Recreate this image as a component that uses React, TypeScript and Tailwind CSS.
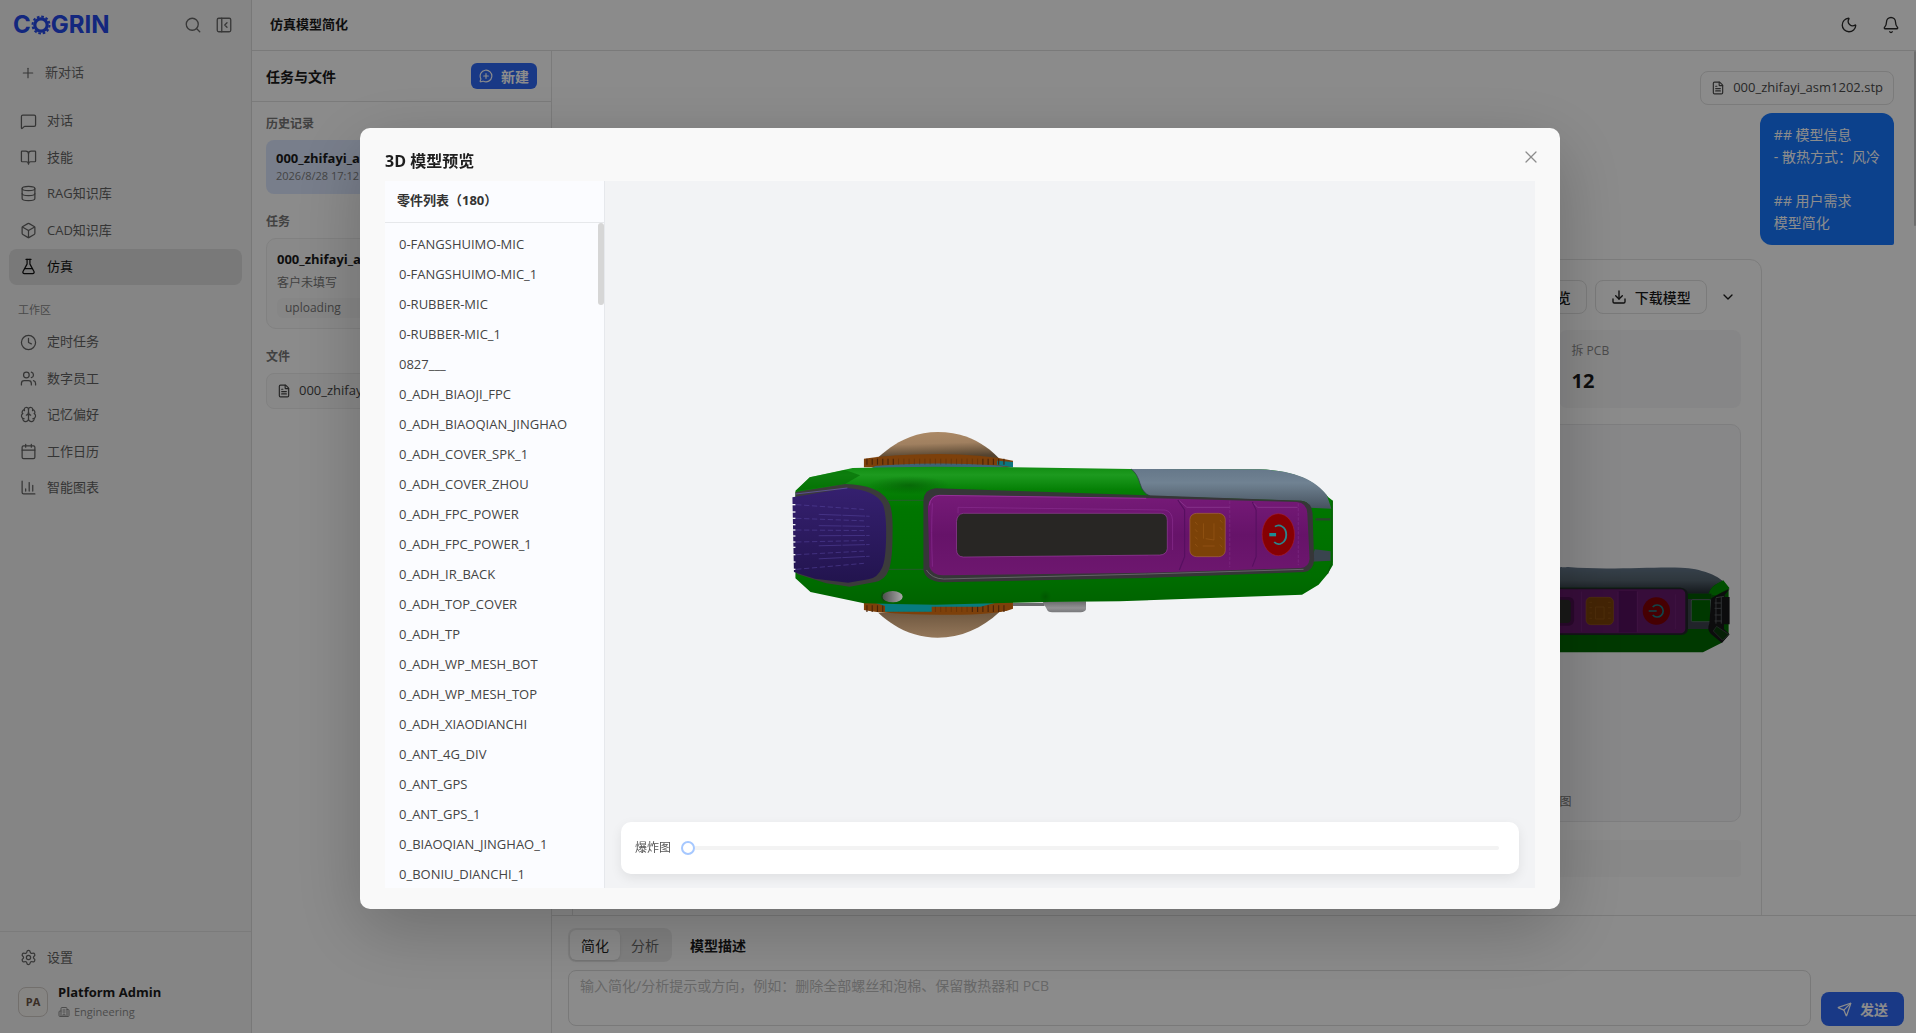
import { useState } from 'react';
import type { ReactNode } from 'react';
import {
  Bell,
  Box,
  BookOpen,
  Brain,
  Building2,
  Calendar,
  ChartColumn,
  ChevronDown,
  Clock,
  Database,
  Download,
  Eye,
  FileText,
  FlaskConical,
  MessageCirclePlus,
  MessageSquare,
  Moon,
  PanelLeftClose,
  Plus,
  Search,
  Send,
  Settings,
  Users,
  X,
} from 'lucide-react';
import type { LucideIcon } from 'lucide-react';

interface NavItem {
  label: string;
  icon: LucideIcon;
  active?: boolean;
}

const mainNav: NavItem[] = [
  { label: '对话', icon: MessageSquare },
  { label: '技能', icon: BookOpen },
  { label: 'RAG知识库', icon: Database },
  { label: 'CAD知识库', icon: Box },
  { label: '仿真', icon: FlaskConical, active: true },
];

const workNav: NavItem[] = [
  { label: '定时任务', icon: Clock },
  { label: '数字员工', icon: Users },
  { label: '记忆偏好', icon: Brain },
  { label: '工作日历', icon: Calendar },
  { label: '智能图表', icon: ChartColumn },
];

const parts = [
  '0-FANGSHUIMO-MIC',
  '0-FANGSHUIMO-MIC_1',
  '0-RUBBER-MIC',
  '0-RUBBER-MIC_1',
  '0827___',
  '0_ADH_BIAOJI_FPC',
  '0_ADH_BIAOQIAN_JINGHAO',
  '0_ADH_COVER_SPK_1',
  '0_ADH_COVER_ZHOU',
  '0_ADH_FPC_POWER',
  '0_ADH_FPC_POWER_1',
  '0_ADH_IR_BACK',
  '0_ADH_TOP_COVER',
  '0_ADH_TP',
  '0_ADH_WP_MESH_BOT',
  '0_ADH_WP_MESH_TOP',
  '0_ADH_XIAODIANCHI',
  '0_ANT_4G_DIV',
  '0_ANT_GPS',
  '0_ANT_GPS_1',
  '0_BIAOQIAN_JINGHAO_1',
  '0_BONIU_DIANCHI_1',
];

function Logo() {
  return (
    <div className="flex items-center font-['Inter',sans-serif] text-[24px] leading-6 font-bold text-[#2347e6]">
      <span>C</span>
      <svg viewBox="0 0 20 20" className="size-5" fill="none" stroke="currentColor" aria-label="O">
        <circle cx="10" cy="10" r="6.2" strokeWidth="3.2" />
        <circle cx="10" cy="10" r="8.5" strokeWidth="2" strokeDasharray="2.6 1.85" />
      </svg>
      <span>GRIN</span>
    </div>
  );
}

function NavList({ items }: { items: NavItem[] }) {
  return (
    <nav className="grid h-[182px] auto-rows-fr">
      {items.map(({ label, icon: Icon, active }) => (
        <a
          key={label}
          href="#"
          className={
            active
              ? 'flex items-center gap-[10px] rounded-lg bg-[#dcdcdc] px-[11px] text-[13px] text-[#111]'
              : 'flex items-center gap-[10px] rounded-lg px-[11px] text-[13px] text-[#626262]'
          }
        >
          <Icon size={17} strokeWidth={1.75} />
          {label}
        </a>
      ))}
    </nav>
  );
}

function Sidebar() {
  return (
    <aside className="flex w-[252px] shrink-0 flex-col border-r border-[#dadada] bg-[#f2f2f2]">
      <div className="flex h-[50px] items-center pr-[18px] pl-[13px]">
        <Logo />
        <button aria-label="搜索" className="ml-auto text-[#666]">
          <Search size={18} strokeWidth={1.75} />
        </button>
        <button aria-label="收起侧栏" className="ml-[13px] text-[#666]">
          <PanelLeftClose size={18} strokeWidth={1.75} />
        </button>
      </div>

      <div className="mt-[5px] px-[9px]">
        <button className="mb-3 flex h-9 w-full items-center gap-[9px] px-[11px] text-[13px] text-[#666]">
          <Plus size={16} strokeWidth={1.75} />
          新对话
        </button>
        <NavList items={mainNav} />
        <p className="mt-4 mb-[5px] px-[9px] text-[11px] leading-[18px] text-[#888]">工作区</p>
        <NavList items={workNav} />
      </div>

      <div className="mt-auto border-t border-[#e0e0e0] px-[9px] pt-2 pb-[11px]">
        <a href="#" className="flex h-[35px] items-center gap-[10px] px-[11px] text-[13px] text-[#626262]">
          <Settings size={17} strokeWidth={1.75} />
          设置
        </a>
        <div className="mt-[7px] flex items-center gap-[10px] px-[9px]">
          <div className="flex size-[30px] items-center justify-center rounded-lg border border-[#cfcac5] bg-[#f5f2ef] text-[11px] font-bold text-[#6b5546]">
            PA
          </div>
          <div>
            <p className="text-[13px] leading-5 font-bold text-[#1c1c1c]">Platform Admin</p>
            <p className="flex items-center gap-1 text-[11px] leading-5 text-[#8a8a8a]">
              <Building2 size={12} />
              Engineering
            </p>
          </div>
        </div>
      </div>
    </aside>
  );
}

function SectionLabel({ children }: { children: ReactNode }) {
  return <h3 className="mb-2 text-[12px] leading-4 font-semibold text-[#777]">{children}</h3>;
}

function TaskColumn() {
  return (
    <section className="flex w-[300px] shrink-0 flex-col border-r border-[#e0e0e0] bg-[#fdfdfd]">
      <div className="flex h-[51px] items-center justify-between border-b border-[#e0e0e0] px-[14px]">
        <h2 className="text-[14px] font-bold text-[#1a1a1a]">任务与文件</h2>
        <button className="flex h-[26px] items-center gap-2 rounded-md bg-[#2f68f5] px-2 text-[14px] font-bold text-white">
          <MessageCirclePlus size={14} />
          新建
        </button>
      </div>
      <div className="px-[14px] pt-[14px]">
        <SectionLabel>历史记录</SectionLabel>
        <div className="mb-5 rounded-lg bg-[#dbe6fd] px-[10px] py-[9px]">
          <p className="text-[13px] leading-[18px] font-bold text-[#1a1a1a]">000_zhifayi_asm1202</p>
          <p className="text-[11px] leading-[18px] text-[#7c7c7c]">2026/8/28 17:12</p>
        </div>
        <SectionLabel>任务</SectionLabel>
        <div className="mb-5 rounded-[10px] border border-[#ebebeb] bg-[#fafafa] p-[10px]">
          <p className="text-[13px] leading-5 font-bold text-[#1a1a1a]">000_zhifayi_asm1202</p>
          <p className="mt-[5px] text-[12px] leading-[18px] text-[#777]">客户未填写</p>
          <p className="mt-[6px] rounded-md bg-[#f4f4f4] px-2 text-[12px] leading-5 text-[#777]">uploading</p>
        </div>
        <SectionLabel>文件</SectionLabel>
        <div className="flex h-9 items-center gap-2 rounded-lg border border-[#ebebeb] bg-[#f8f8f8] px-[10px] text-[13px] text-[#444]">
          <FileText size={14} />
          000_zhifayi_asm1202.stp
        </div>
      </div>
    </section>
  );
}

const metrics = [
  { name: '原始零件', value: 180 },
  { name: '保留零件', value: 96 },
  { name: '拆螺丝', value: 24 },
  { name: '拆泡棉', value: 18 },
  { name: '拆线缆', value: 6 },
  { name: '拆 PCB', value: 12 },
];

const views = ['俯视图', '侧视图', '正视图'];

// side view used in the result thumbnails
function DeviceThumb() {
  return (
    <svg viewBox="-534 15 1059 300" className="h-[100px] w-full" aria-hidden="true">
      <defs>
        <linearGradient id="thumbTop" x1="0" y1="0" x2="0" y2="1">
          <stop offset="0" stopColor="#64778a" />
          <stop offset="0.5" stopColor="#55646f" />
          <stop offset="1" stopColor="#252c33" />
        </linearGradient>
      </defs>
      <path d="M-490 60 L-534 130 L-534 230 L-490 292 L445 292 L500 264 L522 240 L522 98 L500 76 L440 50 L-490 50 Z" fill="#006800" />
      <path d="M-440 42 C-300 30 0 40 40 36 C160 46 300 34 380 38 C440 40 490 62 506 80 C480 84 466 100 462 116 L396 116 Q390 98 376 98 L-440 98 Z" fill="url(#thumbTop)" />
      <path d="M506 76 L525 100 Q500 110 488 122 L462 118 Q466 94 506 76 Z" fill="#009000" />
      <path d="M-534 98 H378 Q400 100 400 120 V220 Q400 240 378 240 H-534 Z" fill="#22262a" />
      <rect x="-400" y="103" width="792" height="132" rx="14" fill="#64186a" />
      <path d="M80 110 V230 M190 110 V230 M248 110 V230 M362 118 V222" stroke="#7d2c86" strokeWidth="1.5" />
      <path d="M192 108 H246 V232 H192 Z" fill="#54105e" />
      <rect x="-340" y="126" width="398" height="86" rx="16" fill="#4b0f50" />
      <rect x="-334" y="134" width="382" height="70" rx="12" fill="#2d2d2b" />
      <rect x="94" y="127" width="82" height="82" rx="14" fill="#7b4208" stroke="#965b18" strokeWidth="2" />
      <path d="M122 156 H148 V192 H122 Z M104 142 h8 M104 158 h8 M104 174 h8 M104 190 h8 M160 142 h8 M160 158 h8 M160 174 h8 M160 190 h8" fill="none" stroke="#965b18" strokeWidth="2" />
      <circle cx="305" cy="168" r="41" fill="#800004" />
      <path d="M294 156 A18 18 0 1 1 294 180 M282 168 H306" fill="none" stroke="#1d7f88" strokeWidth="5" />
      <path d="M400 116 H470 V222 H400 Z" fill="#3c434d" />
      <rect x="410" y="134" width="58" height="66" rx="4" fill="#006600" stroke="#6f7983" strokeWidth="2" />
      <path d="M400 116 H470 V132 H400 Z" fill="#005a00" />
      <path d="M470 130 Q488 118 525 102 L510 120 L510 126 H525 V208 H508 V222 L525 238 L502 264 L468 236 Q456 222 464 206 Z" fill="#161718" />
      <path d="M484 128 L508 124 M480 144 H500 M480 160 H500 M480 180 H500 M480 198 H502 M500 126 V206 M484 130 V206" stroke="#55585c" strokeWidth="3" />
      <path d="M486 214 L522 238 L504 256 L476 228 Z" fill="#0a3a0c" stroke="#4c5053" strokeWidth="2" />
    </svg>
  );
}

function ChatArea() {
  return (
    <div className="relative flex-1 overflow-hidden pt-5 pr-[22px] pl-5">
      <div className="flex flex-col items-end">
        <a
          href="#"
          className="flex h-[34px] items-center gap-2 rounded-lg border border-[#e0e0e0] px-[10px] text-[13px] text-[#4a4a4a]"
        >
          <FileText size={14} />
          000_zhifayi_asm1202.stp
        </a>
        <div className="mt-2 rounded-xl rounded-br-[2px] bg-[#1677ff] px-[14px] py-[11px] text-[14px] leading-[22px] whitespace-pre-line text-white">
          {'## 模型信息\n- 散热方式：风冷\n\n## 用户需求\n模型简化'}
        </div>
      </div>

      <div className="mt-[14px] h-[800px] w-[90%] rounded-xl border border-[#e2e2e2] p-5">
        <div className="flex items-center justify-end gap-2 text-[14px] font-medium text-[#1a1a1a]">
          <button className="flex h-[34px] items-center gap-[10px] rounded-lg border border-[#e0e0e0] px-[15px]">
            <Eye size={16} />
            模型预览
          </button>
          <button className="flex h-[34px] items-center gap-2 rounded-lg border border-[#e0e0e0] px-[15px]">
            <Download size={16} />
            下载模型
          </button>
          <button aria-label="展开" className="flex h-[34px] w-[26px] items-center justify-center">
            <ChevronDown size={16} />
          </button>
        </div>
        <div className="mt-4 grid grid-cols-6 gap-3">
          {metrics.map((metric) => (
            <div key={metric.name} className="h-[78px] rounded-lg bg-[#f5f5f6] px-3 pt-3">
              <p className="text-[12px] leading-[18px] text-[#888]">{metric.name}</p>
              <p className="mt-[7px] text-[20px] leading-7 font-bold text-[#1a1a1a]">{metric.value}</p>
            </div>
          ))}
        </div>
        <div className="mt-4 grid grid-cols-3 gap-3">
          {views.map((view) => (
            <figure
              key={view}
              className="flex h-[398px] flex-col rounded-[10px] border border-[#e6e6e8] bg-[#f6f6f8] p-[10px]"
            >
              <div className="flex flex-1 items-center pb-2">
                <DeviceThumb />
              </div>
              <figcaption className="text-center text-[12px] leading-[18px] text-[#777]">{view}</figcaption>
            </figure>
          ))}
        </div>
        <div className="mt-[18px] h-[37px] rounded bg-[#f7f7f7]" />
      </div>

      <div className="absolute top-0 right-0 h-[175px] w-[2px] rounded bg-[#c8c8c8]" />
    </div>
  );
}

function Composer() {
  return (
    <div className="border-t border-[#dedede] pt-3 pr-3 pb-[7px] pl-4">
      <div className="flex items-center text-[14px]">
        <div className="flex h-[34px] rounded-lg bg-[#ebebeb] p-[2px]">
          <button className="rounded-md bg-[#fdfdfd] px-[11px] text-[#1f1f1f] shadow-sm">简化</button>
          <button className="px-[11px] text-[#666]">分析</button>
        </div>
        <label htmlFor="prompt" className="ml-[18px] font-bold text-[#1a1a1a]">
          模型描述
        </label>
      </div>
      <div className="mt-2 flex items-end gap-[10px]">
        <textarea
          id="prompt"
          placeholder="输入简化/分析提示或方向，例如：删除全部螺丝和泡棉、保留散热器和 PCB"
          className="h-14 flex-1 resize-none rounded-lg border border-[#dcdcdc] px-[11px] py-1 text-[14px] leading-[22px] placeholder:text-[#bdbdbd]"
        />
        <button className="flex h-[34px] items-center gap-2 rounded-lg bg-[#2f68f5] px-4 text-[14px] font-bold text-white">
          <Send size={15} />
          发送
        </button>
      </div>
    </div>
  );
}

// main 3D model; gradients imitate the shaded render
function DeviceModel() {
  const ticks = Array.from({ length: 27 }, (_, i) => 258 + i * 14);
  const ribs = [284, 306, 325, 344, 360, 378, 396, 412, 434, 456, 478];

  return (
    <svg viewBox="27 0 1541 750" preserveAspectRatio="none" className="h-[250px] w-[580px]" aria-label="3D 模型">
      <defs>
        <linearGradient id="domeTop" x1="0" y1="0" x2="0.15" y2="1">
          <stop offset="0" stopColor="#ad8a66" />
          <stop offset="0.5" stopColor="#a08060" />
          <stop offset="1" stopColor="#54432f" />
        </linearGradient>
        <linearGradient id="domeBottom" x1="0" y1="0" x2="0" y2="1">
          <stop offset="0" stopColor="#6e573f" />
          <stop offset="1" stopColor="#94775a" />
        </linearGradient>
        <linearGradient id="body" x1="0" y1="170" x2="0" y2="580" gradientUnits="userSpaceOnUse">
          <stop offset="0" stopColor="#118c12" />
          <stop offset="0.06" stopColor="#1d9a1f" />
          <stop offset="0.17" stopColor="#058005" />
          <stop offset="0.3" stopColor="#007600" />
          <stop offset="0.8" stopColor="#006e00" />
          <stop offset="1" stopColor="#006300" />
        </linearGradient>
        <linearGradient id="cap" x1="0" y1="0" x2="0" y2="1">
          <stop offset="0" stopColor="#66788a" />
          <stop offset="0.35" stopColor="#708292" />
          <stop offset="1" stopColor="#46525e" />
        </linearGradient>
        <linearGradient id="grip" x1="0" y1="0" x2="0" y2="1">
          <stop offset="0" stopColor="#35206f" />
          <stop offset="0.6" stopColor="#2a195c" />
          <stop offset="1" stopColor="#22144e" />
        </linearGradient>
        <linearGradient id="panel" x1="0" y1="0" x2="0" y2="1">
          <stop offset="0" stopColor="#761a78" />
          <stop offset="0.5" stopColor="#661369" />
          <stop offset="1" stopColor="#6e176f" />
        </linearGradient>
        <linearGradient id="hole" x1="0" y1="0" x2="1" y2="0">
          <stop offset="0" stopColor="#4d4d4d" />
          <stop offset="1" stopColor="#a9a9a9" />
        </linearGradient>
        <linearGradient id="knob" x1="0" y1="0" x2="0" y2="1">
          <stop offset="0" stopColor="#6a6a6c" />
          <stop offset="0.6" stopColor="#929294" />
          <stop offset="1" stopColor="#77777a" />
        </linearGradient>
        <radialGradient id="shade">
          <stop offset="0" stopColor="#004400" stopOpacity="0.45" />
          <stop offset="1" stopColor="#004a00" stopOpacity="0" />
        </radialGradient>
      </defs>

      {/* upper lens */}
      <path d="M288 142 C336 92 388 66 446 66 C506 66 560 88 608 144 Z" fill="url(#domeTop)" />
      <path d="M250 146 Q340 132 450 132 T646 152 V172 H250 Z" fill="#7d400a" />
      <path d="M280 168 Q440 154 600 166 L646 174 H270 Z" fill="#3c6577" />
      <path d="M604 152 L646 156 V172 L604 166 Z" fill="#0c7680" />
      {ticks.map((x) => (
        <path key={x} d={`M${x} 146 V164`} stroke="#47230a" strokeWidth={x < 330 || x > 560 ? 3 : 1} />
      ))}

      {/* lower lens */}
      <path d="M288 608 C336 658 388 683 446 683 C508 683 562 656 610 606 Z" fill="url(#domeBottom)" />
      <path d="M250 578 V600 Q300 612 450 614 T646 596 V574 Z" fill="#7d400a" />
      {ticks.map((x) => (
        <path key={x} d={`M${x} 586 V606`} stroke="#47230a" strokeWidth={x < 310 || x > 530 ? 3 : 1} />
      ))}
      <path d="M280 578 H600 L560 590 H430 V605 H306 V588 Z" fill="#077b80" />
      <path d="M646 578 H730 V588 H646 Z" fill="#6b6b6e" />
      <path d="M724 574 H840 V598 Q838 606 826 607 H750 Q738 607 736 598 Z" fill="url(#knob)" />

      {/* housing */}
      <path
        d="M68 242 L106 202 L220 174 L440 170 L646 172 L960 177 L1300 178 C1400 182 1450 215 1484 262 L1496 272 V465 L1482 492 L1458 524 L1414 554 L930 574 L724 576 L440 584 L250 580 L108 546 L68 505 Z"
        fill="url(#body)"
      />
      <ellipse cx="370" cy="226" rx="110" ry="28" fill="url(#shade)" />
      <path d="M106 202 L200 180 L240 196 L200 222 L70 242 Z" fill="#036a03" opacity="0.6" />
      <ellipse cx="732" cy="560" rx="16" ry="20" fill="url(#shade)" />
      <path d="M312 271 H410 M306 478 H414" stroke="#31543a" strokeWidth="2" />

      {/* grey end cap */}
      <path
        d="M960 177 L1300 178 C1400 182 1450 212 1480 256 L1492 296 L1436 293 Q1430 272 1410 272 L1010 258 Q990 248 984 222 Q976 190 960 177 Z"
        fill="url(#cap)"
      />
      <path d="M960 177 Q976 190 984 222 Q990 248 1010 258" fill="none" stroke="#2f3a45" strokeWidth="2" />
      <path d="M1450 328 H1490" stroke="#29452c" strokeWidth="7" />
      <path d="M1448 418 L1490 424 V452 L1436 455 Z" fill="#39444e" />
      <path d="M1494 272 V455 L1482 492" fill="none" stroke="#0a4a0a" strokeWidth="2" />

      {/* ribbed grip */}
      <path
        d="M68 246 L200 222 Q290 226 312 270 Q328 290 326 370 Q326 450 316 480 Q306 510 280 516 L212 530 L150 520 L72 492 Z"
        fill="#3b3b3b"
      />
      <path
        d="M60 262 L206 234 Q280 240 300 282 Q310 310 309 380 Q308 450 298 474 Q286 504 262 508 L208 518 L120 506 L64 486 Z"
        fill="url(#grip)"
      />
      {ribs.map((y, i) => (
        <g key={y}>
          <path d={`M56 ${y} h12`} stroke="#f2f3f5" strokeWidth="4" />
          <path
            d={i % 2 ? `M130 ${y + (370 - y) / 9} L265 ${y + (370 - y) / 5}` : `M70 ${y} L250 ${y + (370 - y) / 6}`}
            stroke="#5646a0"
            strokeWidth="1.5"
            strokeDasharray={i % 2 ? '60 3' : '14 7'}
          />
        </g>
      ))}
      <path d="M68 252 L206 234" stroke="#6a59b5" strokeWidth="2" />

      {/* front panel */}
      <path
        d="M440 235 L1000 256 L1412 272 Q1440 276 1442 310 L1446 450 Q1444 482 1420 486 L1000 504 L462 517 Q412 515 408 478 V272 Q410 238 440 235 Z"
        fill="#363638"
      />
      <path d="M416 480 Q430 506 462 507 L1000 492 L1418 478" fill="none" stroke="#77777a" strokeWidth="2" />
      <path
        d="M450 255 L1000 264 L1400 276 Q1426 278 1428 310 L1434 446 Q1432 472 1410 474 L1000 488 L460 496 Q430 494 424 470 L420 290 Q424 258 450 255 Z"
        fill="url(#panel)"
      />
      <path d="M424 286 Q426 258 450 256 L1000 265" fill="none" stroke="#a23ba6" strokeWidth="2" />
      <path d="M432 280 Q428 360 432 470" fill="none" stroke="#882a90" strokeWidth="2" />
      <path d="M500 310 V292 L1050 300 Q1068 304 1070 330 V420" fill="none" stroke="#862c8c" strokeWidth="2" />
      <path d="M1084 270 L1102 300 V440 L1088 480 M1282 276 L1292 300 V440 L1282 470" fill="none" stroke="#571060" strokeWidth="3" />
      <path d="M1088 272 L1108 292 H1222 M1286 280 L1296 292 H1402" fill="none" stroke="#8c3c92" strokeWidth="2" />
      <path d="M1222 272 V472 M1404 280 V466" stroke="#84328a" strokeWidth="1.5" strokeDasharray="10 4" />
      <path d="M514 310 H1040 Q1056 312 1056 332 V416 Q1054 434 1036 435 L514 441 Q496 440 496 418 V334 Q498 312 514 310 Z" fill="#282624" stroke="#aa4ab0" strokeWidth="1.5" />

      <rect x="1116" y="310" width="94" height="130" rx="18" fill="#7c4208" stroke="#b0704c" strokeWidth="1.5" />
      <path
        d="M1152 340 V386 M1180 340 V390 L1158 386 M1150 408 H1182 M1130 336 l6 8 M1130 358 l6 8 M1130 380 l6 8 M1130 402 l6 8 M1196 330 l6 8 M1196 352 l6 8 M1196 380 l6 8 M1196 404 l6 8"
        fill="none"
        stroke="#965716"
        strokeWidth="2"
      />
      <ellipse cx="1351" cy="374" rx="43" ry="63" fill="#860003" stroke="#b02028" strokeWidth="1.5" />
      <path d="M1342 350 C1354 340 1372 352 1372 374 C1372 398 1352 410 1340 396" fill="none" stroke="#2a858c" strokeWidth="5" />
      <path d="M1327 374 H1345" stroke="#1e8d94" strokeWidth="10" />

      <ellipse cx="326" cy="560" rx="27" ry="17" fill="url(#hole)" />
      <path d="M302 546 Q292 560 304 574" fill="none" stroke="#173d17" strokeWidth="3" />
    </svg>
  );
}

function PreviewModal() {
  const [explode, setExplode] = useState(0);

  return (
    <div className="fixed inset-0 flex items-start justify-center bg-black/45 pt-32">
      <div
        role="dialog"
        aria-labelledby="preview-title"
        className="relative ml-1 w-[1200px] max-w-full rounded-[10px] bg-[#f9f9f9] px-[25px] pb-[21px] shadow-[0_20px_70px_rgba(0,0,0,0.22)]"
      >
        <h2 id="preview-title" className="pt-[21px] pb-2 text-[16px] leading-6 font-bold text-[#1f1f1f]">
          3D 模型预览
        </h2>
        <button aria-label="关闭" className="absolute top-[19px] right-[19px] text-[#8c8c8c]">
          <X size={20} strokeWidth={1.5} />
        </button>

        <div className="flex h-[707px]">
          <div className="relative flex w-[220px] shrink-0 flex-col border-r border-[#e6e8ec] bg-[#fbfcff]">
            <h3 className="h-[42px] shrink-0 border-b border-[#e6e8eb] px-3 text-[13px] leading-[38px] font-bold text-[#333]">
              零件列表（180）
            </h3>
            <ul className="overflow-hidden px-2 pt-[6px]">
              {parts.map((part) => (
                <li key={part} className="h-[30px] truncate px-[6px] text-[13px] leading-[30px] text-[#444]">
                  {part}
                </li>
              ))}
            </ul>
            <div className="absolute top-[42px] right-0 h-[82px] w-[6px] rounded-full bg-[#d6d6d6]" />
          </div>

          <div className="relative flex flex-1 items-center justify-center bg-[#f2f3f5]">
            <DeviceModel />
            <div className="absolute inset-x-4 bottom-[14px] flex h-[52px] items-center gap-[10px] rounded-[10px] bg-white pr-5 pl-[14px] shadow-[0_4px_12px_rgba(0,0,0,0.08)]">
              <label htmlFor="explode" className="text-[12px] text-[#555]">
                爆炸图
              </label>
              <input
                id="explode"
                type="range"
                min={0}
                max={100}
                value={explode}
                onChange={(e) => setExplode(Number(e.target.value))}
                className="h-1 flex-1 appearance-none rounded-full bg-[#f3f3f3] [&::-webkit-slider-thumb]:size-[14px] [&::-webkit-slider-thumb]:appearance-none [&::-webkit-slider-thumb]:rounded-full [&::-webkit-slider-thumb]:border-2 [&::-webkit-slider-thumb]:border-[#a6c8ff] [&::-webkit-slider-thumb]:bg-white"
              />
            </div>
          </div>
        </div>
      </div>
    </div>
  );
}

export default function App() {
  return (
    <div className="flex h-screen overflow-hidden font-['Open_Sans','Noto_Sans_CJK_SC',sans-serif]">
      <Sidebar />
      <div className="flex min-w-0 flex-1 flex-col bg-[#fdfdfd]">
        <header className="flex h-[51px] shrink-0 items-center border-b border-[#dedede] pr-4 pl-[18px] text-[#2a2a2a]">
          <h1 className="text-[13px] font-bold text-[#1a1a1a]">仿真模型简化</h1>
          <button aria-label="深色模式" className="mr-6 ml-auto">
            <Moon size={18} strokeWidth={1.75} />
          </button>
          <button aria-label="通知">
            <Bell size={18} strokeWidth={1.75} />
          </button>
        </header>
        <div className="flex min-h-0 flex-1">
          <TaskColumn />
          <main className="flex min-w-0 flex-1 flex-col">
            <ChatArea />
            <Composer />
          </main>
        </div>
      </div>
      <PreviewModal />
    </div>
  );
}
